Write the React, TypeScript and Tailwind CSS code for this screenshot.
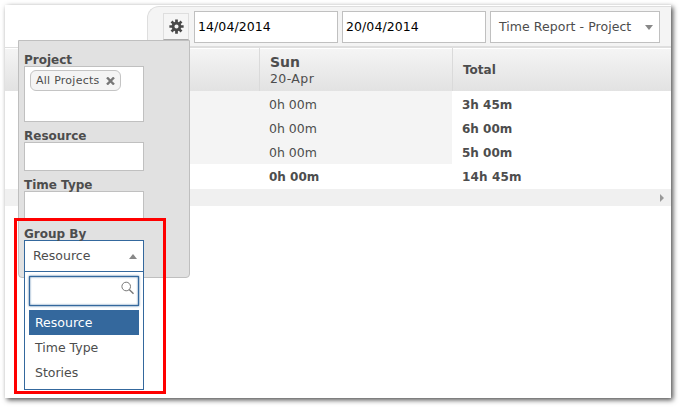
import React from "react";

const rows = [
  { day: "0h 00m", total: "3h 45m" },
  { day: "0h 00m", total: "6h 00m" },
  { day: "0h 00m", total: "5h 00m" },
];

function Gear() {
  return (
    <svg width="15" height="15" viewBox="0 0 16 16" fill="none" stroke="#484848">
      <circle cx="8" cy="8" r="3.7" strokeWidth="3" />
      <path
        d="M8 .4v3M8 12.600v3M.4 8h3M12.600 8h3M2.700 2.700l2 2M11.300 11.300l2 2M2.700 13.300l2-2M11.300 4.700l2-2"
        strokeWidth="2.900"
      />
    </svg>
  );
}

function DateField({ value }: { value: string }) {
  return (
    <div className="flex h-8 w-36 items-center border border-[#c0c0c0] bg-white pl-[3px] text-black">
      <span className="pt-px text-[12.5px] tracking-[0.08px]">{value}</span>
    </div>
  );
}

function Toolbar() {
  return (
    <div className="ml-[142px] flex h-[41px] items-start gap-1 rounded-tl-xl border border-r-0 border-[#dedede] bg-[#f4f4f4] pt-1 pl-[15px]">
      <div className="mt-[2px] mr-px flex h-[27px] w-[26px] items-center justify-center border border-[#dedede] border-b-[#aaa] bg-[#f5f5f5]">
        <Gear />
      </div>
      <DateField value="14/04/2014" />
      <DateField value="20/04/2014" />
      <div className="flex h-8 w-[170px] items-center justify-between border border-[#c0c0c0] bg-white pr-[6px] pl-2">
        <span className="text-[12.5px] tracking-[0.05px]">Time Report - Project</span>
        <svg width="8" height="5" viewBox="0 0 8 5"><path d="M0 0h8L4 5z" fill="#888" /></svg>
      </div>
    </div>
  );
}

function TimeTable() {
  return (
    <div className="text-[12px]">
      <div className="flex h-[44px] border-t border-[#dedede] bg-linear-to-b from-[#f5f5f5] to-[#e2e2e2] shadow-[inset_0_1px_0_#fff]">
        <div className="w-[254px]" />
        <div className="w-[193px] border-l border-[#dadada] pt-[5px] pl-[10px]">
          <div className="text-[14px] leading-[18px] font-bold">Sun</div>
          <div className="text-[12.5px] leading-[15px] tracking-[0.4px]">20-Apr</div>
        </div>
        <div className="flex flex-1 items-center border-l border-[#dadada] pl-[10px] text-[12px] font-bold">Total</div>
      </div>
      {rows.map((row, i) => (
        <div key={i} className={i === rows.length - 1 ? "flex h-[25px]" : "flex h-6"}>
          <div className="ml-[184px] w-[263px] bg-[#f4f4f4] pl-[80px] text-[12.5px] leading-[27px]">{row.day}</div>
          <div className="pl-[10px] leading-[28px] font-bold">{row.total}</div>
        </div>
      ))}
      <div className="flex h-[25px] leading-[27px] font-bold">
        <div className="w-[447px] pl-[264px]">0h 00m</div>
        <div className="pl-[10px] tracking-[0.15px]">14h 45m</div>
      </div>
      <div className="flex h-[17px] items-center justify-end bg-[#f0f0f0] pr-[7px]">
        <svg width="4" height="8" viewBox="0 0 4 8"><path d="M0 0l4 4-4 4z" fill="#999" /></svg>
      </div>
    </div>
  );
}

function Label({ children }: { children: React.ReactNode }) {
  return <div className="h-5 pt-[7px] text-[12px] leading-[15px] font-bold">{children}</div>;
}

function FilterPanel() {
  return (
    <div className="absolute top-[35px] left-[13px] h-[238px] w-[172px] rounded-b border border-[#bfbfbf] bg-[#e1e1e1] pt-[5px] pl-[5px]">
      <Label>Project</Label>
      <div className="h-14 w-[120px] border border-[#c0c0c0] bg-white pt-[3px] pl-[5px]">
        <div className="flex h-[21px] w-[91px] items-center justify-between rounded-md border border-[#c4c4c4] bg-[#f4f4f4] pr-[5px] pl-[5px] text-[11px]">
          <span className="pt-px tracking-[0.25px] whitespace-nowrap">All Projects</span>
          <svg width="9" height="8" viewBox="0 0 9 8"><path d="M1 .5l7 7M8 .5L1 7.500" stroke="#777" strokeWidth="2.400" /></svg>
        </div>
      </div>
      <Label>Resource</Label>
      <div className="h-[29px] w-[120px] border border-[#c0c0c0] bg-white" />
      <Label>Time Type</Label>
      <div className="h-[29px] w-[120px] border border-[#c0c0c0] bg-white" />
      <Label>Group By</Label>
      <GroupSelect />
    </div>
  );
}

function GroupSelect() {
  return (
    <div className="h-[150px] w-[120px] border border-[#34689d] bg-white text-[12.5px]">
      <div className="flex h-[31px] items-center justify-between border-b border-[#34689d] pr-[6px] pl-2">
        <span>Resource</span>
        <svg width="8" height="5" viewBox="0 0 8 5"><path d="M0 5h8L4 0z" fill="#888" /></svg>
      </div>
      <div className="px-1 pt-1">
        <div className="flex h-[30px] justify-end border border-[#34689d] pt-[4px] pr-[4px] shadow-[inset_0_0_2px_#34689d,0_0_2px_#34689d]">
          <svg width="13" height="14" viewBox="0 0 13 14" fill="none" stroke="#777">
            <circle cx="5.200" cy="5.500" r="4.300" />
            <path d="M8.200 8.500l4.300 4.300" strokeWidth="1.400" />
          </svg>
        </div>
        <div className="mt-1 h-[25px] bg-[#34689d] pl-[6px] leading-[26px] text-white">Resource</div>
        <div className="h-[25px] pl-[6px] leading-[26px]">Time Type</div>
        <div className="h-[25px] pl-[6px] leading-[26px]">Stories</div>
      </div>
    </div>
  );
}

export default function App() {
  return (
    <div className="h-[407px] w-[680px] overflow-hidden bg-white pt-[5px] pl-[5px] font-['Verdana','DejaVu_Sans',sans-serif] text-[#4d4d4d]">
      <div className="relative h-[393px] w-[666px] bg-white pt-px shadow-[2px_2px_5px_rgba(0,0,0,0.7)]">
        <Toolbar />
        <TimeTable />
        <FilterPanel />
        <div className="absolute top-[213px] left-[9px] h-[176px] w-[152px] border-3 border-[#ff0000]" />
      </div>
    </div>
  );
}
